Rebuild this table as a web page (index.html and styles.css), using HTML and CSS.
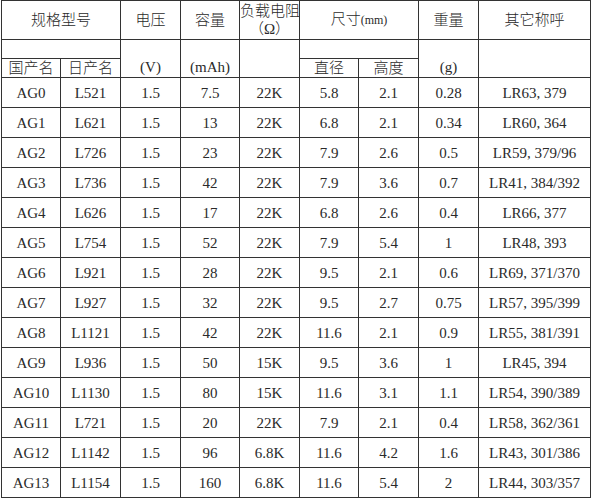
FILE: index.html
```html
<!DOCTYPE html>
<html lang="zh">
<head>
<meta charset="utf-8">
<title>纽扣电池规格</title>
<link rel="stylesheet" href="styles.css">
</head>
<body>
<table class="spec">
  <colgroup>
    <col class="c59"><col class="c60"><col class="c60"><col class="c59"><col class="c60"><col class="c59"><col class="c60"><col class="c60"><col class="c112">
  </colgroup>
  <thead>
    <tr class="h1">
      <th colspan="2" class="wide">规格型号</th>
      <th>电压</th>
      <th>容量</th>
      <th class="two">负载电阻<br><span class="omega">（Ω）</span></th>
      <th colspan="2">尺寸<span class="mm">(mm)</span></th>
      <th>重量</th>
      <th>其它称呼</th>
    </tr>
    <tr class="h2">
      <th colspan="2"></th>
      <th rowspan="2" class="unit">(V)</th>
      <th rowspan="2" class="unit">(mAh)</th>
      <th rowspan="2"></th>
      <th colspan="2"></th>
      <th rowspan="2" class="unit">(g)</th>
      <th rowspan="2"></th>
    </tr>
    <tr class="h3">
      <th>国产名</th>
      <th>日产名</th>
      <th>直径</th>
      <th>高度</th>
    </tr>
  </thead>
  <tbody>
    <tr><td>AG0</td><td>L521</td><td>1.5</td><td>7.5</td><td>22K</td><td>5.8</td><td>2.1</td><td>0.28</td><td>LR63, 379</td></tr>
    <tr><td>AG1</td><td>L621</td><td>1.5</td><td>13</td><td>22K</td><td>6.8</td><td>2.1</td><td>0.34</td><td>LR60, 364</td></tr>
    <tr><td>AG2</td><td>L726</td><td>1.5</td><td>23</td><td>22K</td><td>7.9</td><td>2.6</td><td>0.5</td><td>LR59, 379/96</td></tr>
    <tr><td>AG3</td><td>L736</td><td>1.5</td><td>42</td><td>22K</td><td>7.9</td><td>3.6</td><td>0.7</td><td>LR41, 384/392</td></tr>
    <tr><td>AG4</td><td>L626</td><td>1.5</td><td>17</td><td>22K</td><td>6.8</td><td>2.6</td><td>0.4</td><td>LR66, 377</td></tr>
    <tr><td>AG5</td><td>L754</td><td>1.5</td><td>52</td><td>22K</td><td>7.9</td><td>5.4</td><td>1</td><td>LR48, 393</td></tr>
    <tr><td>AG6</td><td>L921</td><td>1.5</td><td>28</td><td>22K</td><td>9.5</td><td>2.1</td><td>0.6</td><td>LR69, 371/370</td></tr>
    <tr><td>AG7</td><td>L927</td><td>1.5</td><td>32</td><td>22K</td><td>9.5</td><td>2.7</td><td>0.75</td><td>LR57, 395/399</td></tr>
    <tr><td>AG8</td><td>L1121</td><td>1.5</td><td>42</td><td>22K</td><td>11.6</td><td>2.1</td><td>0.9</td><td>LR55, 381/391</td></tr>
    <tr><td>AG9</td><td>L936</td><td>1.5</td><td>50</td><td>15K</td><td>9.5</td><td>3.6</td><td>1</td><td>LR45, 394</td></tr>
    <tr><td>AG10</td><td>L1130</td><td>1.5</td><td>80</td><td>15K</td><td>11.6</td><td>3.1</td><td>1.1</td><td>LR54, 390/389</td></tr>
    <tr><td>AG11</td><td>L721</td><td>1.5</td><td>20</td><td>22K</td><td>7.9</td><td>2.1</td><td>0.4</td><td>LR58, 362/361</td></tr>
    <tr><td>AG12</td><td>L1142</td><td>1.5</td><td>96</td><td>6.8K</td><td>11.6</td><td>4.2</td><td>1.6</td><td>LR43, 301/386</td></tr>
    <tr><td>AG13</td><td>L1154</td><td>1.5</td><td>160</td><td>6.8K</td><td>11.6</td><td>5.4</td><td>2</td><td>LR44, 303/357</td></tr>
  </tbody>
</table>
</body>
</html>
```

FILE: styles.css
```css
html, body {
  margin: 0;
  padding: 0;
  background: #ffffff;
}
body {
  padding-left: 1px;
}
.spec {
  border-collapse: collapse;
  table-layout: fixed;
  width: 589px;
  color: #2a2a2a;
  font-family: "Liberation Serif", "Noto Sans CJK SC", serif;
  font-size: 15px;
}
.c59 { width: 59px; }
.c60 { width: 60px; }
.c112 { width: 112px; }
.spec th,
.spec td {
  border: 1px solid #333333;
  padding: 0;
  text-align: center;
  font-weight: normal;
  line-height: 17px;
  white-space: nowrap;
  overflow: hidden;
}
.spec th {
  font-family: "Liberation Serif", "Noto Sans CJK SC", serif;
  font-weight: 300;
}
.h1 th {
  height: 37px;
  vertical-align: middle;
}
.h1 th.two {
  vertical-align: top;
  line-height: 18px;
  padding-top: 1px;
}
.omega {
  letter-spacing: 0;
}
.mm {
  font-size: 12px;
}
.h2 th {
  height: 18px;
}
.h3 th {
  height: 18px;
  vertical-align: bottom;
}
.spec th.unit {
  vertical-align: bottom;
  padding-bottom: 1px;
}
.spec td {
  height: 30px;
  padding-top: 2px;
  box-sizing: border-box;
}
```
